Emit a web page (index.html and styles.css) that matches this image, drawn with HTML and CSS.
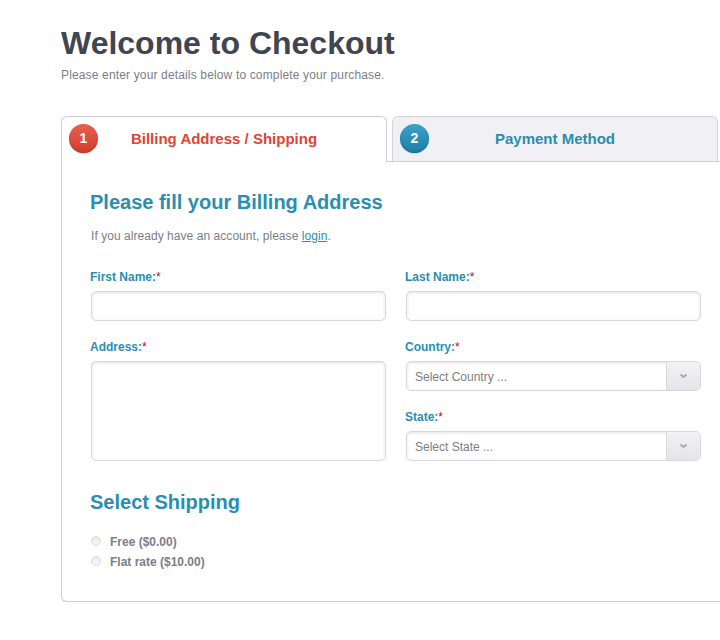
FILE: index.html
```html
<!DOCTYPE html>
<html lang="en">
<head>
    <meta charset="UTF-8">
    <meta name="viewport" content="width=device-width, initial-scale=1.0">
    <title>Welcome to Checkout</title>
    <link rel="stylesheet" href="styles.css">
</head>
<body>
    <div class="checkout">
        <h1 class="page-title">Welcome to Checkout</h1>
        <p class="page-sub">Please enter your details below to complete your purchase.</p>

        <div class="tabs">
            <div class="tab active">
                <span class="step red">1</span>
                <span class="tab-label">Billing Address / Shipping</span>
            </div>
            <div class="tab">
                <span class="step blue">2</span>
                <span class="tab-label">Payment Method</span>
            </div>
        </div>

        <div class="panel">
            <h2 class="section-title">Please fill your Billing Address</h2>
            <p class="login-note">If you already have an account, please <a href="#">login</a>.</p>

            <div class="form-grid">
                <div class="field">
                    <label>First Name:<span class="req">*</span></label>
                    <input type="text" class="text-input">
                </div>
                <div class="field">
                    <label>Last Name:<span class="req">*</span></label>
                    <input type="text" class="text-input">
                </div>
                <div class="field">
                    <label>Address:<span class="req">*</span></label>
                    <textarea class="text-area"></textarea>
                </div>
                <div class="field-stack">
                    <div class="field">
                        <label>Country:<span class="req">*</span></label>
                        <div class="select-box">
                            <span class="select-text">Select Country ...</span>
                            <span class="select-btn">
                                <svg width="9" height="6" viewBox="0 0 9 6"><path d="M1.5 1.5l3 2.5l3-2.5" fill="none" stroke="#a9a9b2" stroke-width="2"/></svg>
                            </span>
                        </div>
                    </div>
                    <div class="field">
                        <label>State:<span class="req">*</span></label>
                        <div class="select-box">
                            <span class="select-text">Select State ...</span>
                            <span class="select-btn">
                                <svg width="9" height="6" viewBox="0 0 9 6"><path d="M1.5 1.5l3 2.5l3-2.5" fill="none" stroke="#a9a9b2" stroke-width="2"/></svg>
                            </span>
                        </div>
                    </div>
                </div>
            </div>

            <h2 class="section-title shipping-title">Select Shipping</h2>
            <div class="radio-row"><span class="radio"></span>Free ($0.00)</div>
            <div class="radio-row"><span class="radio"></span>Flat rate ($10.00)</div>
        </div>
    </div>
</body>
</html>
```

FILE: styles.css
```css
html, body {
    overflow-x: hidden;
}

body {
    margin: 0;
    background-color: #fff;
    font-family: "Liberation Sans", Arial, sans-serif;
    color: #7d7d87;
}

.checkout {
    width: 680px;
    padding: 23px 0 0 61px;
}

.page-title {
    margin: 0;
    font-size: 32px;
    line-height: 40px;
    font-weight: bold;
    color: #3f4552;
}

.page-sub {
    margin: 3px 0 0;
    font-size: 12px;
    line-height: 18px;
    letter-spacing: 0.15px;
}

/* tabs */
.tabs {
    display: flex;
    gap: 5px;
    margin-top: 32px;
    border-bottom: 1px solid #cfcfd3;
    height: 45px;
}

.tab {
    box-sizing: border-box;
    width: 326px;
    height: 45px;
    display: flex;
    align-items: center;
    position: relative;
    background-color: #f0f0f5;
    border: 1px solid #d4d4d8;
    border-bottom: none;
    border-radius: 6px 6px 0 0;
    font-size: 15px;
    font-weight: bold;
    color: #2a8eb0;
}

.tab.active {
    height: 46px;
    background-color: #fff;
    border-color: #cfcfd3;
    color: #e04434;
    z-index: 1;
}

.tab-label {
    flex: 1;
    text-align: center;
    padding: 0 36px 2px 0;
}

.step {
    flex: none;
    width: 29px;
    height: 29px;
    margin-left: 7px;
    margin-bottom: 2px;
    border-radius: 50%;
    text-align: center;
    line-height: 29px;
    font-size: 14px;
    font-weight: bold;
    color: #fff;
}

.step.red {
    background: linear-gradient(#e8604e, #d03c2e);
    box-shadow: inset 0 -1px 1px #b8322a, 0 1px 1px #d8d8d8;
}

.step.blue {
    background: linear-gradient(#3ba3c6, #1d7ea3);
    box-shadow: inset 0 -1px 1px #176b8c, 0 1px 1px #d8d8d8;
}

/* panel */
.panel {
    box-sizing: border-box;
    height: 440px;
    padding: 28px 29px 0;
    border: 1px solid #cfcfd3;
    border-top: none;
    border-radius: 0 0 6px 6px;
    box-shadow: 0 1px 0 #e4e4e4;
}

.section-title {
    margin: 0 0 0 -1px;
    font-size: 20px;
    line-height: 24px;
    font-weight: bold;
    color: #2a8eb0;
}

.login-note {
    margin: 13px 0 0;
    font-size: 12px;
    line-height: 18px;
    letter-spacing: 0.05px;
}

.login-note a {
    color: #2a8eb0;
}

.form-grid {
    display: grid;
    grid-template-columns: 295px 295px;
    column-gap: 20px;
    row-gap: 17px;
    margin-top: 23px;
}

.field label {
    display: block;
    height: 16px;
    margin: 0 0 7px -1px;
    font-size: 12px;
    line-height: 18px;
    font-weight: bold;
    color: #2a8eb0;
}

.req {
    color: #e00000;
    font-weight: normal;
}

.text-input,
.text-area,
.select-box {
    display: block;
    box-sizing: border-box;
    width: 295px;
    margin: 0;
    background-color: #fff;
    border: 1px solid #d8d8dc;
    border-radius: 5px;
    box-shadow: inset 0 1px 3px #e2e2e2;
}

.text-input {
    height: 30px;
}

.text-area {
    height: 100px;
    resize: none;
}

.field-stack {
    display: flex;
    flex-direction: column;
    gap: 17px;
}

.select-box {
    display: flex;
    height: 30px;
    align-items: stretch;
    overflow: hidden;
}

.select-text {
    flex: 1;
    padding-left: 8px;
    font-size: 12px;
    line-height: 30px;
}

.select-btn {
    width: 33px;
    display: flex;
    align-items: center;
    justify-content: center;
    border-left: 1px solid #d8d8dc;
    background: linear-gradient(#f3f3f6, #e5e5e9);
}

.shipping-title {
    margin-top: 29px;
}

.radio-row {
    box-sizing: border-box;
    display: flex;
    align-items: center;
    height: 20px;
    padding-top: 2px;
    font-size: 12px;
    font-weight: bold;
}

.shipping-title + .radio-row {
    margin-top: 17px;
}

.radio {
    box-sizing: border-box;
    width: 10px;
    height: 10px;
    margin: -2px 9px 0 0;
    border: 1px solid #e0e0e0;
    border-radius: 50%;
    background: #f4f4f4;
    box-shadow: inset 0 1px 2px #dcdcdc;
}
```
